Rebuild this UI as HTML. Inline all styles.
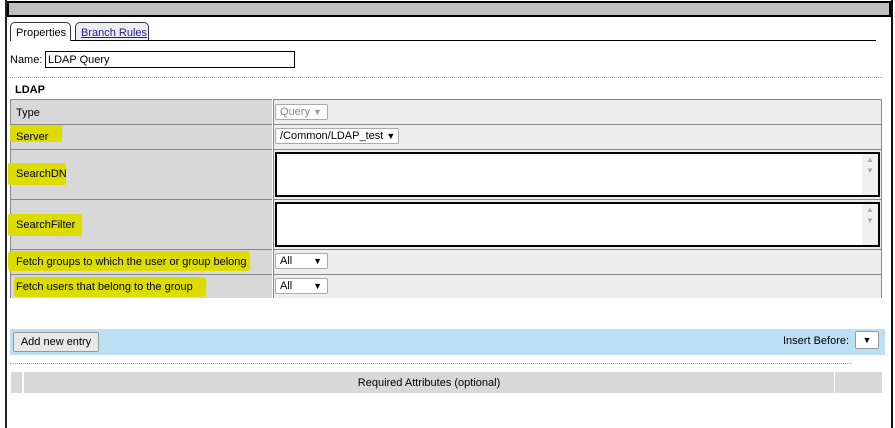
<!DOCTYPE html>
<html><head><style>
body{margin:0;width:895px;height:428px;background:#fff;position:relative;overflow:hidden;font-family:"Liberation Sans",sans-serif;font-size:11px;color:#000}
.a{position:absolute}
.lab{position:absolute;left:10px;width:262px;background:#d8d8d8;border-top:1px solid #888;box-sizing:border-box}
.val{position:absolute;left:273px;width:609px;background:#ededed;border-top:1px solid #888;border-left:1px solid #888;border-right:1px solid #888;box-sizing:border-box}
.hl{position:absolute;background:#dcdc00;}
.sel{position:absolute;background:#fff;border:1px solid #aaa;border-radius:2px;height:16px;box-sizing:border-box;line-height:14px;padding-left:4px}
.ta{position:absolute;left:275px;width:605px;background:#fff;border:2px solid #000;box-sizing:border-box}
.sb{position:absolute;right:0;top:0;width:16px;height:100%;background:#f0f0f0;color:#aaa;font-size:8px;text-align:center;line-height:11px}
</style></head><body>
<div class="a" style="left:5px;top:0;width:2px;height:428px;background:#222"></div>
<div class="a" style="left:891px;top:0;width:2px;height:428px;background:#111"></div>
<div class="a" style="left:7px;top:1px;width:884px;height:16px;background:#c0c0c0;border:2px solid #000;box-sizing:border-box"></div>
<div class="a" style="left:10px;top:22px;width:61px;height:19px;border:1px solid #333;border-bottom:none;border-radius:5px 5px 0 0;background:#fff;box-sizing:border-box;padding:4px 0 0 5px">Properties</div>
<div class="a" style="left:75px;top:22px;width:74px;height:18px;border:1px solid #333;border-bottom:none;border-radius:5px 5px 0 0;background:#eee;box-sizing:border-box;padding:4px 0 0 5px;color:#1a1a9a;text-decoration:underline">Branch Rules</div>
<div class="a" style="left:71px;top:40px;width:805px;height:1px;background:#000"></div>
<div class="a" style="left:10px;top:54px">Name:</div>
<div class="a" style="left:45px;top:51px;width:250px;height:17px;border:1px solid #000;box-sizing:border-box;padding:2px 0 0 2px">LDAP Query</div>
<div class="a" style="left:10px;top:77px;width:873px;border-top:1px dotted #aaa"></div>
<div class="a" style="left:15px;top:84px;font-weight:bold">LDAP</div>
<div class="lab" style="top:99px;height:25px"></div><div class="val" style="top:99px;height:25px"></div>
<div class="lab" style="top:124px;height:25px"></div><div class="val" style="top:124px;height:25px"></div>
<div class="lab" style="top:149px;height:50px"></div><div class="val" style="top:149px;height:50px"></div>
<div class="lab" style="top:199px;height:50px"></div><div class="val" style="top:199px;height:50px"></div>
<div class="lab" style="top:249px;height:25px"></div><div class="val" style="top:249px;height:25px"></div>
<div class="lab" style="top:274px;height:24px"></div><div class="val" style="top:274px;height:24px"></div>
<div class="a" style="left:10px;top:99px;width:1px;height:199px;background:#888"></div>
<div class="hl" style="left:10px;top:125px;width:52px;height:17px"></div>
<div class="hl" style="left:8px;top:163px;width:58px;height:22px;border-radius:2px"></div>
<div class="hl" style="left:8px;top:214px;width:74px;height:22px;border-radius:2px"></div>
<div class="hl" style="left:8px;top:251px;width:242px;height:20px;border-radius:3px"></div>
<div class="hl" style="left:14px;top:277px;width:192px;height:20px;border-radius:3px"></div>
<div class="a" style="left:16px;top:107px">Type</div>
<div class="a" style="left:16px;top:131px">Server</div>
<div class="a" style="left:16px;top:168px">SearchDN</div>
<div class="a" style="left:16px;top:219px">SearchFilter</div>
<div class="a" style="left:16px;top:256px">Fetch groups to which the user or group belong</div>
<div class="a" style="left:16px;top:281px">Fetch users that belong to the group</div>
<div class="sel" style="left:275px;top:104px;width:53px;color:#888">Query <span style="font-size:9px;color:#999">&#9660;</span></div>
<div class="sel" style="left:275px;top:128px;width:124px">/Common/LDAP_test <span style="font-size:9px">&#9660;</span></div>
<div class="ta" style="top:152px;height:45px"><div class="sb">▲<br>▼</div></div>
<div class="ta" style="top:202px;height:45px"><div class="sb">▲<br>▼</div></div>
<div class="sel" style="left:275px;top:253px;width:53px">All <span style="position:absolute;right:5px;font-size:9px">&#9660;</span></div>
<div class="sel" style="left:275px;top:278px;width:53px">All <span style="position:absolute;right:5px;font-size:9px">&#9660;</span></div>
<div class="a" style="left:10px;top:329px;width:875px;height:26px;background:#bbdff5"></div>
<div class="a" style="left:13px;top:332px;width:86px;height:20px;background:#e8e8e8;border:1px solid #999;border-radius:2px;box-sizing:border-box;text-align:center;line-height:18px">Add new entry</div>
<div class="a" style="left:783px;top:335px">Insert Before:</div>
<div class="a" style="left:855px;top:331px;width:24px;height:18px;background:#fff;border:1px solid #999;border-radius:2px;box-sizing:border-box;text-align:center;font-size:9px;line-height:16px">&#9660;</div>
<div class="a" style="left:10px;top:363px;width:842px;border-top:1px dotted #aaa"></div>
<div class="a" style="left:11px;top:372px;width:11px;height:21px;background:#d8d8d8"></div>
<div class="a" style="left:24px;top:372px;width:810px;height:21px;background:#d8d8d8;text-align:center;line-height:22px">Required Attributes (optional)</div>
<div class="a" style="left:835px;top:372px;width:47px;height:21px;background:#d8d8d8"></div>
</body></html>
